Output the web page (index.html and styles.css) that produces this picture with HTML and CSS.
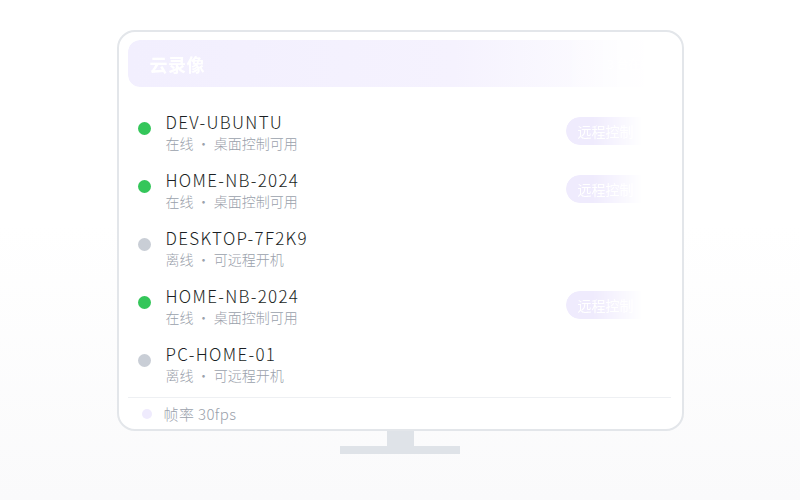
FILE: index.html
```html
<!DOCTYPE html>
<html lang="zh-CN">
<head>
    <meta charset="UTF-8">
    <meta name="viewport" content="width=device-width, initial-scale=1.0">
    <title>云录像</title>
    <link rel="stylesheet" href="styles.css">
</head>
<body>
    <div class="stage">
        <div class="monitor">
            <div class="screen-header">
                <span class="screen-title">云录像</span>
                <span class="screen-meta">3 台在线</span>
            </div>

            <ul class="device-list">
                <li class="device">
                    <span class="dot online"></span>
                    <div class="device-info">
                        <div class="device-name">DEV-UBUNTU</div>
                        <div class="device-status">在线 · 桌面控制可用</div>
                    </div>
                    <span class="control-btn">远程控制</span>
                </li>
                <li class="device">
                    <span class="dot online"></span>
                    <div class="device-info">
                        <div class="device-name">HOME-NB-2024</div>
                        <div class="device-status">在线 · 桌面控制可用</div>
                    </div>
                    <span class="control-btn">远程控制</span>
                </li>
                <li class="device">
                    <span class="dot offline"></span>
                    <div class="device-info">
                        <div class="device-name">DESKTOP-7F2K9</div>
                        <div class="device-status">离线 · 可远程开机</div>
                    </div>
                </li>
                <li class="device">
                    <span class="dot online"></span>
                    <div class="device-info">
                        <div class="device-name">HOME-NB-2024</div>
                        <div class="device-status">在线 · 桌面控制可用</div>
                    </div>
                    <span class="control-btn">远程控制</span>
                </li>
                <li class="device">
                    <span class="dot offline"></span>
                    <div class="device-info">
                        <div class="device-name">PC-HOME-01</div>
                        <div class="device-status">离线 · 可远程开机</div>
                    </div>
                </li>
            </ul>

            <div class="screen-footer">
                <span class="footer-dot"></span>
                <span>帧率 30fps</span>
            </div>
        </div>
        <div class="stand-neck"></div>
        <div class="stand-base"></div>
    </div>
</body>
</html>
```

FILE: styles.css
```css
* {
    margin: 0;
    padding: 0;
    box-sizing: border-box;
}

body {
    font-family: "Noto Sans CJK SC", "Noto Sans", sans-serif;
    background: linear-gradient(180deg, #ffffff 0%, #ffffff 45%, #fafafb 100%);
    width: 800px;
    height: 500px;
    overflow: hidden;
}

.stage {
    display: flex;
    flex-direction: column;
    align-items: center;
    padding-top: 30px;
}

.monitor {
    width: 567px;
    height: 401px;
    border: 2px solid #e3e6ea;
    border-radius: 18px;
    padding: 8px 11px 0 9px;
    display: flex;
    flex-direction: column;
    background: #fff;
}

.screen-header {
    height: 47px;
    border-radius: 12px;
    background: linear-gradient(90deg, #f2effe 0%, #f5f2fe 60%, #ffffff 100%);
    display: flex;
    align-items: center;
    justify-content: space-between;
    padding: 0 18px 0 22px;
    -webkit-mask-image: linear-gradient(90deg, #000 80%, transparent 100%);
    mask-image: linear-gradient(90deg, #000 80%, transparent 100%);
}

.screen-title {
    color: #ffffff;
    font-size: 18px;
    font-weight: 700;
    letter-spacing: 0.5px;
}

.screen-meta {
    color: #ffffff;
    font-size: 12px;
    opacity: 0.8;
}

.device-list {
    list-style: none;
    padding-top: 16px;
    flex: 1;
}

.device {
    height: 58px;
    padding: 8px 15px 8px 10px;
    display: flex;
    align-items: flex-start;
}

.dot {
    width: 13px;
    height: 13px;
    border-radius: 50%;
    margin-top: 11px;
    margin-right: 15px;
    flex-shrink: 0;
}

.dot.online {
    background: #34c65a;
}

.dot.offline {
    background: #c9ced6;
}

.device-info {
    flex: 1;
}

.device-name {
    font-size: 17px;
    line-height: 22px;
    font-weight: 300;
    color: #1b1f24;
    letter-spacing: 1.3px;
}

.device-status {
    font-size: 14px;
    line-height: 20px;
    font-weight: 300;
    color: #9aa1ab;
}

.control-btn {
    margin-top: 6px;
    width: 90px;
    height: 28px;
    border-radius: 14px;
    background: #efebfd;
    color: #ffffff;
    font-size: 14px;
    line-height: 28px;
    padding-left: 12px;
    -webkit-mask-image: linear-gradient(90deg, #000 30%, transparent 85%);
    mask-image: linear-gradient(90deg, #000 30%, transparent 85%);
}

.screen-footer {
    height: 32px;
    border-top: 1px solid #eef0f3;
    display: flex;
    align-items: center;
    gap: 12px;
    padding-left: 14px;
    font-size: 15px;
    font-weight: 300;
    color: #9aa1ab;
    letter-spacing: 0.4px;
}

.footer-dot {
    width: 10px;
    height: 10px;
    border-radius: 50%;
    background: #efebfd;
}

.stand-neck {
    width: 27px;
    height: 15px;
    background: #dfe3e8;
}

.stand-base {
    width: 120px;
    height: 8px;
    background: #dfe3e8;
}
```
